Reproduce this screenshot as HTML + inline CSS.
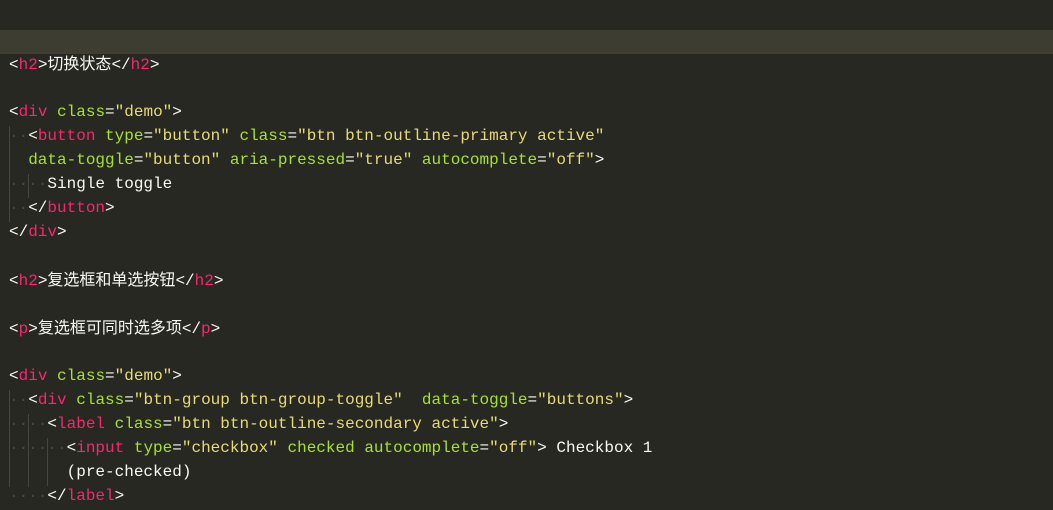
<!DOCTYPE html>
<html><head><meta charset="utf-8"><style>
html,body{margin:0;padding:0;background:#272822;width:1053px;height:487px;overflow:hidden}
.code{position:absolute;left:0;top:30px;width:1053px;font-family:"Liberation Mono","Noto Sans CJK SC",monospace;font-size:16px;line-height:24px;color:#f8f8f2}
.l{height:24px;padding-left:9px;position:relative;white-space:pre;overflow:hidden}
.l>span.in{position:relative;top:-2px}
.hl{background:#3e3d32}
.t{color:#f92672}.a{color:#a6e22e}.s{color:#e6db74}
.g{color:#4a4a42}
.c{font-family:"Noto Sans CJK SC",sans-serif;line-height:20px}
.v{position:absolute;width:1px;background:#464640}
</style></head><body>
<div class="v" style="left:9px;top:126px;height:96px"></div>
<div class="v" style="left:28px;top:174px;height:24px"></div>
<div class="v" style="left:9px;top:390px;height:97px"></div>
<div class="v" style="left:28px;top:414px;height:73px"></div>
<div class="v" style="left:47px;top:438px;height:48px"></div>
<div class="code"><div class="l hl"> </div><div class="l"><span class="in">&lt;<span class="t">h2</span>&gt;<span class="c">切换状态</span>&lt;/<span class="t">h2</span>&gt;</span></div><div class="l"> </div><div class="l"><span class="in">&lt;<span class="t">div</span> <span class="a">class</span>=<span class="s">"demo"</span>&gt;</span></div><div class="l"><span class="in"><span class="g">··</span>&lt;<span class="t">button</span> <span class="a">type</span>=<span class="s">"button"</span> <span class="a">class</span>=<span class="s">"btn btn-outline-primary active"</span></span></div><div class="l"><span class="in">  <span class="a">data-toggle</span>=<span class="s">"button"</span> <span class="a">aria-pressed</span>=<span class="s">"true"</span> <span class="a">autocomplete</span>=<span class="s">"off"</span>&gt;</span></div><div class="l"><span class="in"><span class="g">····</span>Single toggle</span></div><div class="l"><span class="in"><span class="g">··</span>&lt;/<span class="t">button</span>&gt;</span></div><div class="l"><span class="in">&lt;/<span class="t">div</span>&gt;</span></div><div class="l"> </div><div class="l"><span class="in">&lt;<span class="t">h2</span>&gt;<span class="c">复选框和单选按钮</span>&lt;/<span class="t">h2</span>&gt;</span></div><div class="l"> </div><div class="l"><span class="in">&lt;<span class="t">p</span>&gt;<span class="c">复选框可同时选多项</span>&lt;/<span class="t">p</span>&gt;</span></div><div class="l"> </div><div class="l"><span class="in">&lt;<span class="t">div</span> <span class="a">class</span>=<span class="s">"demo"</span>&gt;</span></div><div class="l"><span class="in"><span class="g">··</span>&lt;<span class="t">div</span> <span class="a">class</span>=<span class="s">"btn-group btn-group-toggle"</span>  <span class="a">data-toggle</span>=<span class="s">"buttons"</span>&gt;</span></div><div class="l"><span class="in"><span class="g">····</span>&lt;<span class="t">label</span> <span class="a">class</span>=<span class="s">"btn btn-outline-secondary active"</span>&gt;</span></div><div class="l"><span class="in"><span class="g">······</span>&lt;<span class="t">input</span> <span class="a">type</span>=<span class="s">"checkbox"</span> <span class="a">checked</span> <span class="a">autocomplete</span>=<span class="s">"off"</span>&gt; Checkbox 1</span></div><div class="l"><span class="in">      (pre-checked)</span></div><div class="l"><span class="in"><span class="g">····</span>&lt;/<span class="t">label</span>&gt;</span></div></div>
</body></html>
